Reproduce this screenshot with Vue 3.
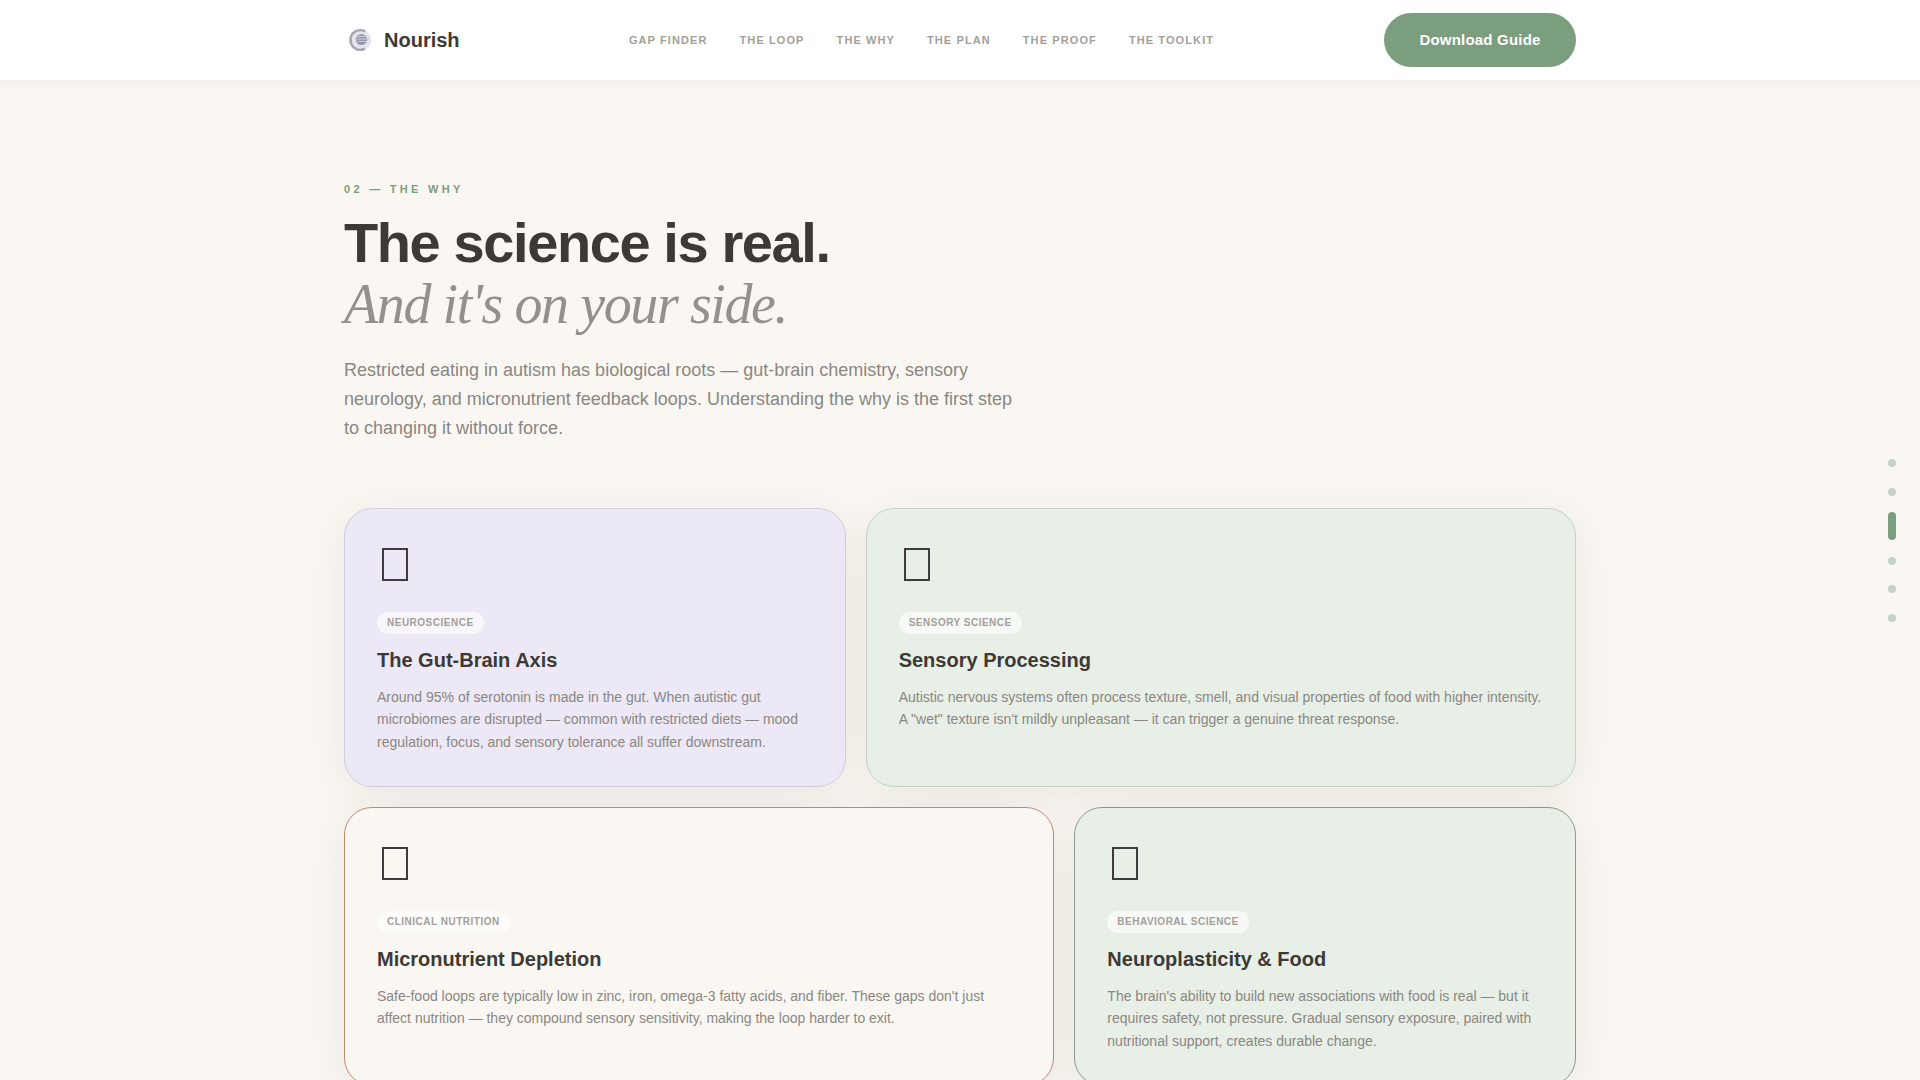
<script setup>
const links = ['Gap Finder', 'The Loop', 'The Why', 'The Plan', 'The Proof', 'The Toolkit']

const cards = [
  {
    kind: 'lavender',
    span: 5,
    tag: 'Neuroscience',
    title: 'The Gut-Brain Axis',
    text: 'Around 95% of serotonin is made in the gut. When autistic gut microbiomes are disrupted — common with restricted diets — mood regulation, focus, and sensory tolerance all suffer downstream.'
  },
  {
    kind: 'sage',
    span: 7,
    tag: 'Sensory Science',
    title: 'Sensory Processing',
    text: 'Autistic nervous systems often process texture, smell, and visual properties of food with higher intensity. A "wet" texture isn\'t mildly unpleasant — it can trigger a genuine threat response.'
  },
  {
    kind: 'cream',
    span: 7,
    tag: 'Clinical Nutrition',
    title: 'Micronutrient Depletion',
    text: 'Safe-food loops are typically low in zinc, iron, omega-3 fatty acids, and fiber. These gaps don\'t just affect nutrition — they compound sensory sensitivity, making the loop harder to exit.'
  },
  {
    kind: 'sage-dark',
    span: 5,
    tag: 'Behavioral Science',
    title: 'Neuroplasticity & Food',
    text: 'The brain\'s ability to build new associations with food is real — but it requires safety, not pressure. Gradual sensory exposure, paired with nutritional support, creates durable change.'
  }
]

const dots = [0, 1, 2, 3, 4, 5]
const activeDot = 2
</script>

<template>
  <div class="page">
    <header class="nav">
      <div class="nav-inner">
        <a class="logo" href="#">
          <svg class="logo-mark" viewBox="0 0 24 24" width="24" height="24">
            <circle cx="12" cy="12" r="11" fill="#e4e4ea" />
            <path d="M17 3.4A9.8 9.8 0 1 0 17 20.6" fill="none" stroke="#a5a5b4" stroke-width="2.4" />
            <circle cx="13.5" cy="11.5" r="5.6" fill="#9397ac" />
            <path d="M9.5 8.5h10M9 11h12M9.5 13.5h10" stroke="#cfd1da" stroke-width="1" />
          </svg>
          <span>Nourish</span>
        </a>
        <nav class="links">
          <a v-for="link in links" :key="link" href="#">{{ link }}</a>
        </nav>
        <button class="cta">Download Guide</button>
      </div>
    </header>

    <section class="why">
      <div class="eyebrow">02 — The Why</div>
      <h1>The science is real.<em>And it's on your side.</em></h1>
      <p class="lead">
        Restricted eating in autism has biological roots — gut-brain chemistry, sensory neurology, and micronutrient feedback loops. Understanding the why is the first step to changing it without force.
      </p>

      <div class="grid">
        <article
          v-for="card in cards"
          :key="card.title"
          class="card"
          :class="[card.kind, 'span-' + card.span]"
        >
          <div class="icon"><span class="tofu"></span></div>
          <span class="tag">{{ card.tag }}</span>
          <h3>{{ card.title }}</h3>
          <p>{{ card.text }}</p>
        </article>
      </div>
    </section>

    <div class="side-dots">
      <span
        v-for="dot in dots"
        :key="dot"
        class="dot"
        :class="{ active: dot === activeDot }"
      ></span>
    </div>
  </div>
</template>

<style>
html,
body {
  margin: 0;
  background: #faf7f2;
}
</style>

<style scoped>
.page {
  min-height: 100vh;
  background: #faf7f2;
  color: #3d3a36;
  font-family: "Liberation Sans", Arial, sans-serif;
}

.nav {
  position: relative;
  z-index: 5;
  height: 80px;
  background: #ffffff;
  box-shadow: 0 2px 12px rgba(61, 58, 54, 0.06);
}

.nav-inner {
  box-sizing: border-box;
  width: 1232px;
  height: 100%;
  margin: 0 auto;
  display: flex;
  align-items: center;
  justify-content: space-between;
}

.logo {
  display: flex;
  align-items: center;
  gap: 12px;
  margin-left: 4px;
  width: 240px;
  font-size: 20px;
  font-weight: 700;
  color: #3d3a36;
  text-decoration: none;
}

.links {
  display: flex;
  gap: 32px;
  margin-right: 129px;
}

.links a {
  font-size: 11px;
  font-weight: 700;
  letter-spacing: 1.1px;
  text-transform: uppercase;
  color: #a3a09a;
  text-decoration: none;
}

.cta {
  width: 192px;
  height: 54px;
  padding: 0 0 2px;
  border: none;
  border-radius: 27px;
  background: #7a9e7e;
  color: #ffffff;
  font-family: inherit;
  font-size: 15px;
  font-weight: 700;
  letter-spacing: 0.2px;
}

.why {
  width: 1232px;
  margin: 0 auto;
  padding: 102px 0 60px;
}

.eyebrow {
  font-size: 11px;
  font-weight: 700;
  line-height: 14px;
  letter-spacing: 3.3px;
  text-transform: uppercase;
  color: #7a9e7e;
}

h1 {
  margin: 16px 0 0;
  font-size: 56px;
  font-weight: 700;
  line-height: 61px;
  letter-spacing: -1.4px;
  color: #3d3a36;
}

h1 em {
  display: block;
  margin-top: 1px;
  font-family: "Liberation Serif", "Times New Roman", serif;
  font-weight: 400;
  font-style: italic;
  letter-spacing: -1.4px;
  color: #94918c;
}

.lead {
  width: 680px;
  margin: 21px 0 0;
  font-size: 18px;
  line-height: 29px;
  color: #8a8782;
}

.grid {
  display: grid;
  grid-template-columns: repeat(12, 1fr);
  gap: 20px;
  margin-top: 65px;
}

.span-5 {
  grid-column: span 5;
}

.span-7 {
  grid-column: span 7;
}

.card {
  box-sizing: border-box;
  height: 279px;
  padding: 32px;
  border: 1px solid transparent;
  border-radius: 28px;
  box-shadow: 0 8px 40px rgba(61, 58, 54, 0.08);
}

.card.lavender {
  background: #ede8f5;
  border-color: #d2cddd;
}

.card.sage {
  background: #e8efe6;
  border-color: #c5d2c5;
}

.card.cream {
  background: #faf7f2;
  border-color: #c08a72;
}

.card.sage-dark {
  background: #e8efe6;
  border-color: #89998b;
}

.icon {
  display: flex;
  height: 41px;
  margin-bottom: 23px;
  padding: 7px 0 0 5px;
}

.tofu {
  box-sizing: border-box;
  display: block;
  width: 26px;
  height: 33px;
  border: 2px solid #3f3b3c;
}

.tag {
  display: inline-block;
  padding: 5px 10px;
  border-radius: 20px;
  background: rgba(255, 255, 255, 0.6);
  font-size: 10px;
  font-weight: 700;
  line-height: 12px;
  letter-spacing: 0.5px;
  text-transform: uppercase;
  color: #a3a09a;
}

h3 {
  margin: 13px 0 0;
  font-size: 20px;
  font-weight: 700;
  line-height: 26px;
  color: #3d3a36;
}

.card p {
  margin: 13px 0 0;
  font-size: 14px;
  line-height: 22.4px;
  color: #8a8782;
}

.side-dots {
  position: fixed;
  top: 459px;
  right: 24px;
  z-index: 10;
  display: flex;
  flex-direction: column;
  gap: 20.5px;
}

.dot {
  width: 8px;
  height: 8px;
  border-radius: 4px;
  background: #c5d3c6;
}

.dot.active {
  height: 28px;
  margin: -4px 0;
  background: #7a9e7e;
}
</style>
